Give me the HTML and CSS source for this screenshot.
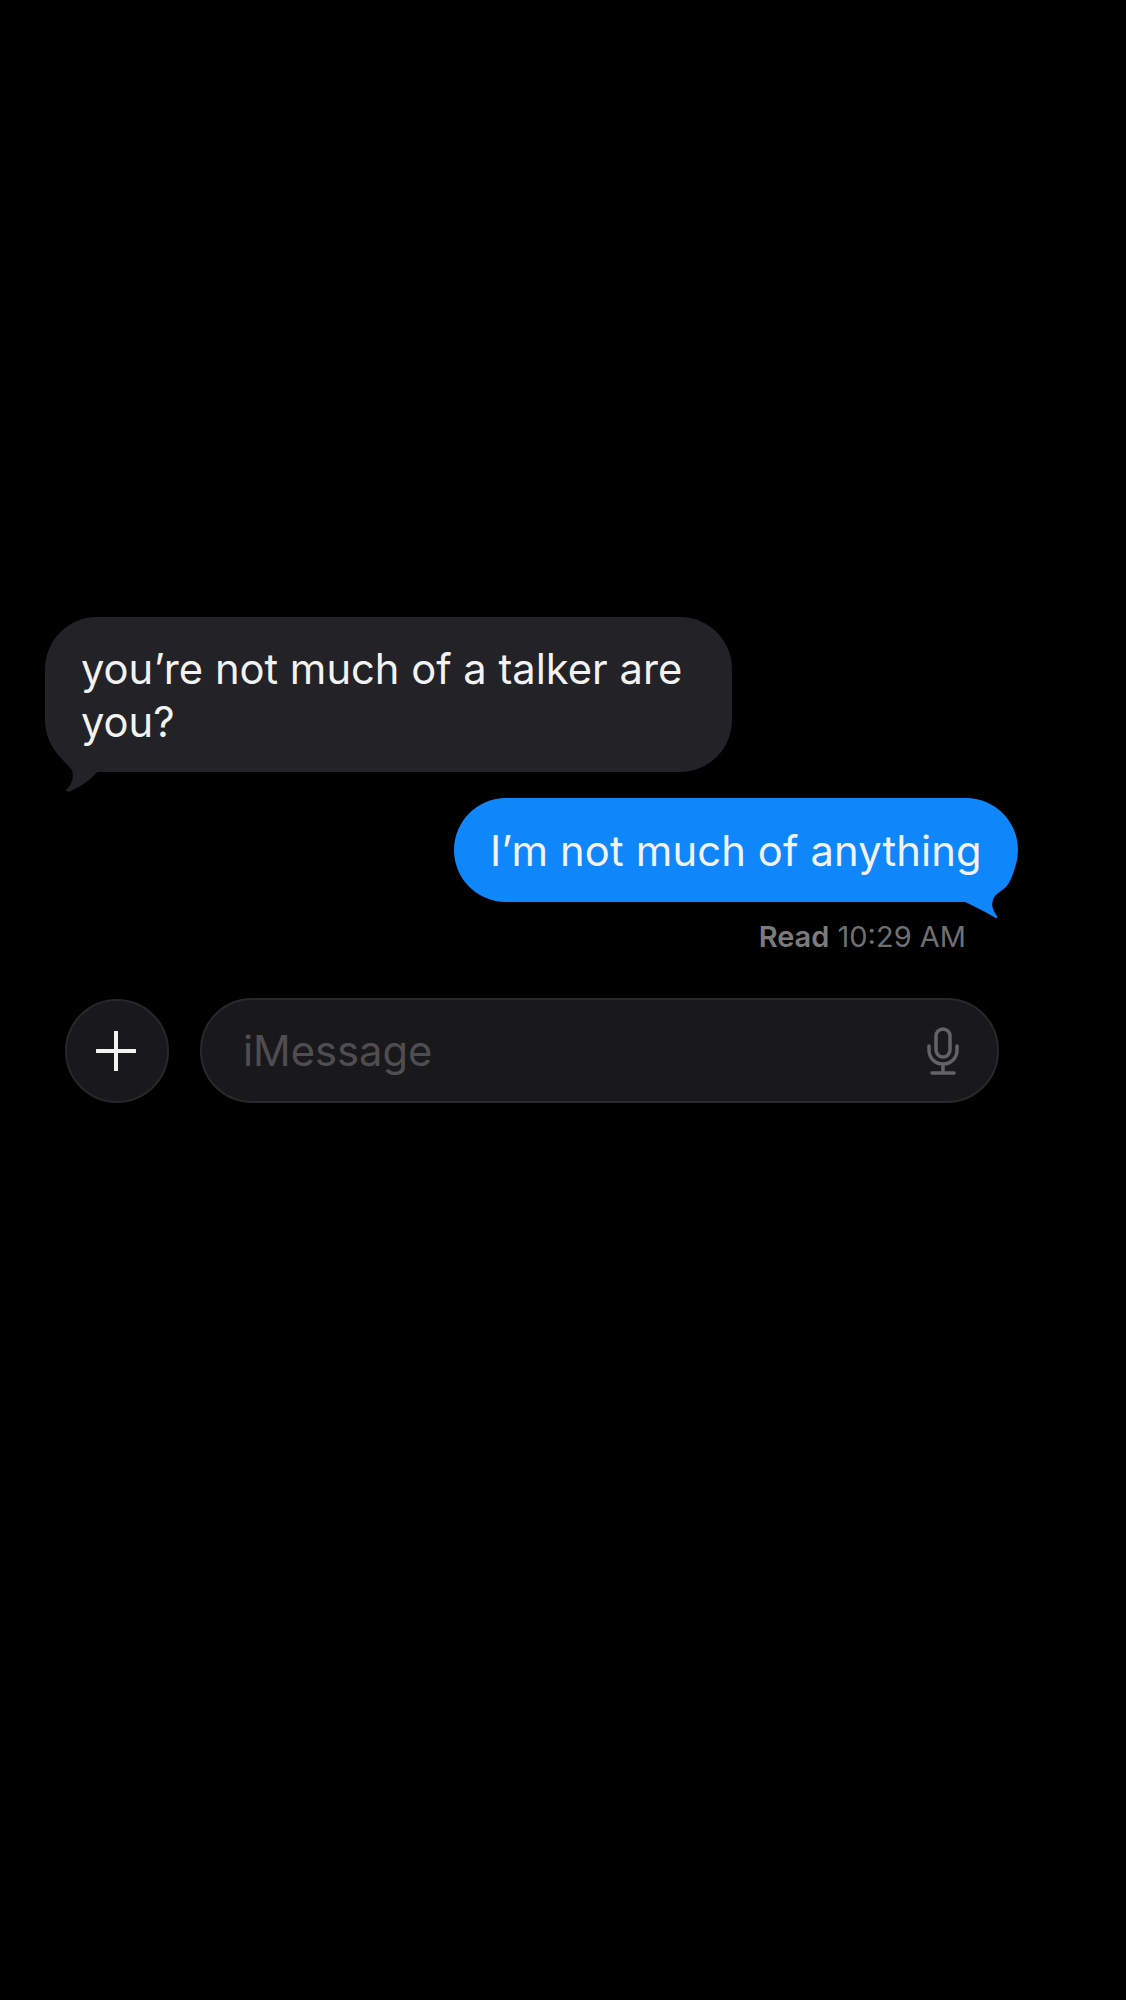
FILE: index.html
```html
<!DOCTYPE html>
<html lang="en">
<head>
    <meta charset="UTF-8">
    <meta name="viewport" content="width=device-width, initial-scale=1.0">
    <title>iMessage</title>
    <link rel="stylesheet" href="styles.css">
</head>
<body>

<div class="thread">
    <div class="bubble received">
        you’re not much of a talker are you?
        <svg class="tail tail-left" viewBox="0 0 60 55"><path d="M6 3C12 15 20 22 27 30C29 38 27 44 21 50C22 52 24 52 26 51C36 46 46 40 54 30Z"/></svg>
    </div>
    <div class="bubble sent">
        I’m not much of anything
        <svg class="tail tail-right" viewBox="0 0 60 55"><path d="M3 33C14 38 26 44 36 50C38 52 40 51 39 49C35 44 33 38 35 33C36 28 42 25 48 20C52 15 55 8 57 0L30 0Z"/></svg>
    </div>
    <div class="receipt"><b>Read</b> 10:29 AM</div>
</div>

<div class="composer">
    <div class="add-btn">
        <svg viewBox="0 0 40 40" width="40" height="40"><path d="M20 1V39M1 20H39" stroke="#f2f2f2" stroke-width="4" stroke-linecap="round"/></svg>
    </div>
    <div class="field">
        <span class="placeholder">iMessage</span>
        <svg class="mic" viewBox="0 0 32 48" width="32" height="48" fill="none" stroke="#636365" stroke-width="3.5" stroke-linecap="round">
            <rect x="9" y="2" width="14" height="28" rx="7"/>
            <path d="M2 19V23C2 31 8 37 16 37C24 37 30 31 30 23V19M16 37V46M5 46H27"/>
        </svg>
    </div>
</div>

</body>
</html>
```

FILE: styles.css
```css
* {box-sizing: border-box; margin: 0; padding: 0;}
body {
    font-family: 'Inter', 'Liberation Sans', sans-serif;
    background: #000;
    color: #f2f2f2;
    min-height: 2000px;
    padding-top: 617px;
}

.thread {
    display: flex;
    flex-direction: column;
    padding: 0 108px 0 45px;
}

.bubble {
    position: relative;
    font-size: 41.7px;
    line-height: 53px;
    border-radius: 52px;
}

.received {
    width: 687px;
    height: 155px;
    padding: 26px 36px;
    background: #232227;
}

.sent {
    align-self: flex-end;
    width: 564px;
    height: 104px;
    margin-top: 26px;
    padding: 27px 36px;
    white-space: nowrap;
    letter-spacing: 0.16px;
    background: #0f87fb;
}

.tail {
    position: absolute;
    width: 60px;
    height: 55px;
}

.tail-left {
    left: 0;
    bottom: -23px;
    fill: #232227;
}

.tail-right {
    right: 0;
    bottom: -20px;
    fill: #0f87fb;
}

.receipt {
    align-self: flex-end;
    margin-top: 19px;
    padding-right: 52px;
    font-size: 29px;
    line-height: 32px;
    color: #6f6f71;
}

.receipt b {
    font-weight: 600;
    color: #7b7b7d;
}

.composer {
    display: flex;
    align-items: center;
    gap: 31px;
    margin-top: 45px;
    padding-left: 65px;
}

.add-btn {
    display: flex;
    justify-content: center;
    align-items: center;
    width: 104px;
    height: 104px;
    padding-right: 2px;
    border-radius: 50%;
    background: #19191b;
    border: 2px solid #27272a;
}

.field {
    display: flex;
    justify-content: space-between;
    align-items: center;
    width: 799px;
    height: 105px;
    padding: 0 38px 0 41px;
    border-radius: 52px;
    background: #19191b;
    border: 2px solid #29292b;
}

.placeholder {
    font-size: 41.7px;
    color: #4e4e50;
}
```
